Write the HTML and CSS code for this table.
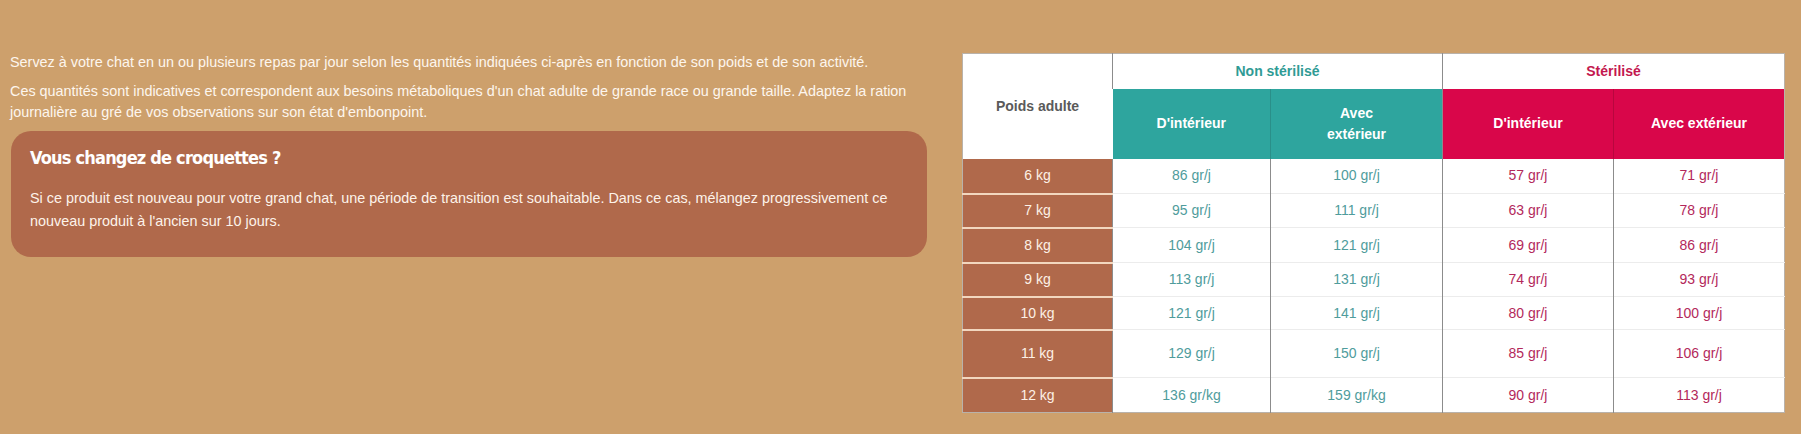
FILE: index.html
```html
<!DOCTYPE html>
<html lang="fr">
<head>
<meta charset="utf-8">
<title>Rations</title>
<link rel="stylesheet" href="styles.css">
</head>
<body>
<div class="page">
  <div class="intro">
    <p>Servez à votre chat en un ou plusieurs repas par jour selon les quantités indiquées ci-après en fonction de son poids et de son activité.</p>
    <p>Ces quantités sont indicatives et correspondent aux besoins métaboliques d'un chat adulte de grande race ou grande taille. Adaptez la ration journalière au gré de vos observations sur son état d'embonpoint.</p>
    <div class="notice">
      <h3 class="notice-title">Vous changez de croquettes ?</h3>
      <p class="notice-text">Si ce produit est nouveau pour votre grand chat, une période de transition est souhaitable. Dans ce cas, mélangez progressivement ce nouveau produit à l'ancien sur 10 jours.</p>
    </div>
  </div>
  <table class="ration">
    <colgroup>
      <col class="c-poids">
      <col class="c-a">
      <col class="c-b">
      <col class="c-c">
      <col class="c-d">
    </colgroup>
    <thead>
      <tr class="h1">
        <th rowspan="2" class="poids-head">Poids adulte</th>
        <th colspan="2" class="grp grp-teal">Non stérilisé</th>
        <th colspan="2" class="grp grp-red">Stérilisé</th>
      </tr>
      <tr class="h2">
        <th class="sub teal">D'intérieur</th>
        <th class="sub teal teal-sep">Avec<br>extérieur</th>
        <th class="sub red">D'intérieur</th>
        <th class="sub red red-sep">Avec extérieur</th>
      </tr>
    </thead>
    <tbody>
      <tr class="r35"><td class="kg">6 kg</td><td class="vt">86 gr/j</td><td class="vt">100 gr/j</td><td class="vr">57 gr/j</td><td class="vr">71 gr/j</td></tr>
      <tr class="r34"><td class="kg">7 kg</td><td class="vt">95 gr/j</td><td class="vt">111 gr/j</td><td class="vr">63 gr/j</td><td class="vr">78 gr/j</td></tr>
      <tr class="r35"><td class="kg">8 kg</td><td class="vt">104 gr/j</td><td class="vt">121 gr/j</td><td class="vr">69 gr/j</td><td class="vr">86 gr/j</td></tr>
      <tr class="r34"><td class="kg">9 kg</td><td class="vt">113 gr/j</td><td class="vt">131 gr/j</td><td class="vr">74 gr/j</td><td class="vr">93 gr/j</td></tr>
      <tr class="r33"><td class="kg">10 kg</td><td class="vt">121 gr/j</td><td class="vt">141 gr/j</td><td class="vr">80 gr/j</td><td class="vr">100 gr/j</td></tr>
      <tr class="r48"><td class="kg">11 kg</td><td class="vt">129 gr/j</td><td class="vt">150 gr/j</td><td class="vr">85 gr/j</td><td class="vr">106 gr/j</td></tr>
      <tr class="r35"><td class="kg">12 kg</td><td class="vt">136 gr/kg</td><td class="vt">159 gr/kg</td><td class="vr">90 gr/j</td><td class="vr">113 gr/j</td></tr>
    </tbody>
  </table>
</div>
</body>
</html>
```
FILE: styles.css
```css
html, body {
  margin: 0;
  padding: 0;
}
body {
  background: #cda06c;
  font-family: "Liberation Sans", Arial, sans-serif;
  color: #fff;
}
.page {
  display: flex;
  align-items: flex-start;
  padding: 53px 0 0 10px;
}
.intro {
  width: 917px;
  flex: none;
  margin-top: -1px;
}
.intro > p {
  margin: 0 0 8px;
  font-size: 14.4px;
  line-height: 21px;
  color: #fdf6ee;
}
.notice {
  margin: 3px 0 0 1px;
  background: #b0694b;
  border-radius: 20px;
  padding: 12px 19px 24px;
}
.notice-title {
  margin: 0;
  font-family: "DejaVu Sans Condensed", "DejaVu Sans", sans-serif;
  font-weight: bold;
  font-size: 18px;
  letter-spacing: -0.8px;
  line-height: 30px;
  color: #fff;
}
.notice-text {
  margin: 14px 0 0;
  font-size: 14.4px;
  line-height: 23px;
  color: #fdf3ea;
}
.ration {
  margin-left: 35px;
  border-collapse: collapse;
  table-layout: fixed;
  width: 822px;
  font-size: 14px;
  border: 1px solid #b9b2aa;
}
.c-poids { width: 150px; }
.c-a { width: 158px; }
.c-b { width: 172px; }
.c-c { width: 171px; }
.c-d { width: 171px; }
.ration th, .ration td {
  padding: 0 8px;
  text-align: center;
  vertical-align: middle;
}
.h1 { height: 35px; }
.h2 { height: 70px; }
.poids-head {
  background: #fff;
  color: #5a5a5a;
  font-weight: bold;
  padding-bottom: 2px;
}
.grp {
  background: #fff;
  font-weight: bold;
  border-left: 1px solid #8c8c8c;
}
.grp-teal { color: #2f9b95; }
.grp-red { color: #c3184f; }
.sub {
  color: #fff;
  font-weight: bold;
  line-height: 21px;
  padding-top: 4px;
}
.teal { background: #2ea59e; }
.teal-sep { border-left: 1px solid #2a8f89; }
.red {
  background: #d9064a;
  border-left: 1px solid #8c8c8c;
}
.red-sep { border-left: 1px solid #b8063e; }
.ration tbody td {
  background: #fff;
  border-top: 1px solid #ececec;
  border-left: 1px solid #8c8c8c;
  padding-bottom: 1px;
}
.ration tbody td.kg {
  background: #b0694b;
  color: #fdf1e6;
  border-left: none;
  border-top: 2px solid #f2d7bf;
}
.ration tbody tr:first-child td { border-top: none; }
.ration tbody td.vt { color: #4f9c9c; }
.ration tbody td.vr { color: #b3285b; }
.r33 { height: 33px; }
.r34 { height: 34px; }
.r35 { height: 35px; }
.r48 { height: 48px; }
```
